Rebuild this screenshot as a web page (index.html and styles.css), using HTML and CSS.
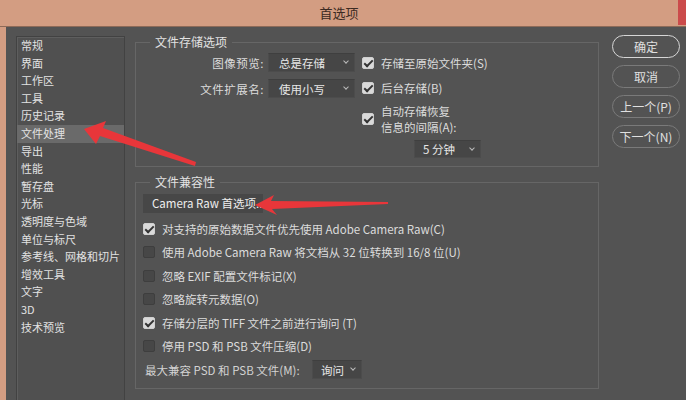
FILE: index.html
```html
<!DOCTYPE html>
<html lang="zh-CN">
  <head>
    <meta charset="UTF-8" />
    <meta name="viewport" content="width=device-width, initial-scale=1.0" />
    <title>首选项</title>
    <link rel="stylesheet" href="styles.css">
  </head>
  <body>
    <div class="window">
      <div class="titlebar">
        <span class="title">首选项</span>
        <span class="close"></span>
      </div>

      <div class="body">
        <!-- Список разделов -->
        <ul class="sidebar">
          <li>常规</li>
          <li>界面</li>
          <li>工作区</li>
          <li>工具</li>
          <li>历史记录</li>
          <li class="active">文件处理</li>
          <li>导出</li>
          <li>性能</li>
          <li>暂存盘</li>
          <li>光标</li>
          <li>透明度与色域</li>
          <li>单位与标尺</li>
          <li>参考线、网格和切片</li>
          <li>增效工具</li>
          <li>文字</li>
          <li>3D</li>
          <li>技术预览</li>
        </ul>

        <div class="main">
          <fieldset class="group group-save">
            <legend>文件存储选项</legend>
            <div class="save-grid">
              <div class="save-left">
                <div class="field">
                  <span class="field-label">图像预览:</span>
                  <div class="select select-wide">总是存储<span class="chev"></span></div>
                </div>
                <div class="field">
                  <span class="field-label">文件扩展名:</span>
                  <div class="select select-wide">使用小写<span class="chev"></span></div>
                </div>
              </div>
              <div class="save-right">
                <div class="check on"><span class="box"></span><span>存储至原始文件夹(S)</span></div>
                <div class="check on"><span class="box"></span><span>后台存储(B)</span></div>
                <div class="check on tall"><span class="box"></span><span>自动存储恢复<br>信息的间隔(A):</span></div>
                <div class="select select-minutes">5 分钟<span class="chev"></span></div>
              </div>
            </div>
          </fieldset>

          <fieldset class="group group-compat">
            <legend>文件兼容性</legend>
            <div class="raw-btn">Camera Raw 首选项...</div>
            <div class="check row on"><span class="box"></span><span>对支持的原始数据文件优先使用 Adobe Camera Raw(C)</span></div>
            <div class="check row"><span class="box"></span><span>使用 Adobe Camera Raw 将文档从 32 位转换到 16/8 位(U)</span></div>
            <div class="check row"><span class="box"></span><span>忽略 EXIF 配置文件标记(X)</span></div>
            <div class="check row"><span class="box"></span><span>忽略旋转元数据(O)</span></div>
            <div class="check row on"><span class="box"></span><span>存储分层的 TIFF 文件之前进行询问 (T)</span></div>
            <div class="check row"><span class="box"></span><span>停用 PSD 和 PSB 文件压缩(D)</span></div>
            <div class="row compat-row">
              <span class="compat-label">最大兼容 PSD 和 PSB 文件(M):</span>
              <div class="select select-ask">询问<span class="chev"></span></div>
            </div>
          </fieldset>
        </div>

        <div class="buttons">
          <button class="btn btn-primary">确定</button>
          <button class="btn">取消</button>
          <button class="btn">上一个(P)</button>
          <button class="btn">下一个(N)</button>
        </div>
      </div>

      <!-- Красные стрелки поверх окна -->
      <svg class="arrows" width="686" height="400" viewBox="0 0 686 400">
        <polygon points="84,129 106,121 103,128 196,162 195,166 100,136 96,144" fill="#e8363a" />
        <polygon points="255,205 274,195 271,201 388,202 388,204 272,209 277,215" fill="#e8363a" />
      </svg>
    </div>
  </body>
</html>
```

FILE: styles.css
```css
* {
  box-sizing: border-box;
}

body {
  margin: 0;
  width: 686px;
  height: 400px;
  overflow: hidden;
  background-color: #535353;
  font-family: "Noto Sans CJK SC", "Noto Sans", sans-serif;
  font-size: 11.5px;
  color: #dcdcdc;
}

.window {
  position: relative;
  height: 400px;
}

.titlebar {
  display: flex;
  height: 27px;
  background-color: #d39d82;
  border-bottom: 1px solid #8d6a58;
}

.title {
  flex: 1;
  text-align: center;
  line-height: 26px;
  font-size: 13px;
  color: #3b2a22;
}

.close {
  width: 8px;
  height: 25px;
  background-color: #cb4b4b;
}

.body {
  display: flex;
  align-items: flex-start;
  height: 373px;
  padding: 7px 0 0 10px;
  border-left: 6px solid #d39d82;
}

/* Список разделов */
.sidebar {
  list-style: none;
  margin: 2px 10px 0 0;
  padding: 0;
  width: 109px;
  height: 380px;
  border: 1px solid #424242;
  box-shadow: inset 1px 1px 0 #5e5e5e;
  background-color: #505050;
  font-size: 11px;
}

.sidebar li {
  height: 17.6px;
  line-height: 17.6px;
  padding-left: 4px;
  white-space: nowrap;
  color: #e2e2e2;
}

.sidebar li.active {
  background-color: #6a6a6a;
}

.main {
  width: 464px;
}

.group {
  margin: 0;
  padding: 0;
  min-width: 0;
  border: 1px solid #666;
}

.group legend {
  margin-left: 14px;
  padding: 0 5px;
  height: 16px;
  line-height: 16px;
  color: #e2e2e2;
  font-size: 12px;
}

.group-save {
  padding: 3px 0 8px 0;
}

.save-grid {
  display: flex;
}

.save-left {
  display: flex;
  flex-direction: column;
  gap: 7px;
  width: 219px;
}

.field {
  display: flex;
  align-items: center;
}

.field-label {
  flex: 1;
  text-align: right;
  margin-right: 4px;
  letter-spacing: 0.5px;
}

.select {
  position: relative;
  height: 19px;
  line-height: 18px;
  padding-left: 8px;
  background-color: #464646;
  border: 1px solid #4c4c4c;
  border-top-color: #3f3f3f;
  color: #e6e6e6;
  white-space: nowrap;
}

.chev {
  position: absolute;
  right: 6px;
  top: 5px;
  width: 4px;
  height: 4px;
  border-right: 1px solid #bbb;
  border-bottom: 1px solid #bbb;
  transform: rotate(45deg);
}

.select-wide {
  width: 87px;
  padding-left: 10px;
}

.save-right {
  margin-left: 7px;
  display: flex;
  flex-direction: column;
}

.check {
  display: flex;
  align-items: center;
  gap: 7px;
  height: 19px;
  white-space: nowrap;
}

.save-right .check {
  margin-bottom: 6px;
}

.save-right .check.tall {
  height: 32px;
  line-height: 16.5px;
  margin-bottom: 5px;
}

.box {
  position: relative;
  flex: none;
  width: 12px;
  height: 12px;
  border-radius: 2px;
  background-color: #474747;
  border: 1px solid #3e3e3e;
}

.check.on .box {
  background-color: #dadada;
  border-color: #cfcfcf;
}

.check.on .box::after {
  content: "";
  position: absolute;
  left: 3px;
  top: 0px;
  width: 3px;
  height: 7px;
  border-right: 2px solid #333;
  border-bottom: 2px solid #333;
  transform: rotate(45deg);
}

.select-minutes {
  margin-left: 52px;
  width: 67px;
  height: 18px;
  line-height: 17px;
}

.group-compat {
  margin-top: 7px;
  padding: 4px 0 6px 7px;
}

.group-compat legend {
  margin-left: 7px;
}

.raw-btn {
  width: 120px;
  height: 19px;
  line-height: 19px;
  padding-left: 9px;
  background-color: #474747;
  color: #eee;
  white-space: nowrap;
  margin-bottom: 4px;
}

.row {
  height: 23.5px;
}

.compat-row {
  display: flex;
  align-items: center;
  padding-left: 2px;
  color: #d2d2d2;
}

.compat-label {
  width: 167px;
  white-space: nowrap;
}

.select-ask {
  width: 50px;
}

.buttons {
  display: flex;
  flex-direction: column;
  gap: 7px;
  margin: 1px 0 0 13px;
}

.btn {
  width: 68px;
  height: 23px;
  padding: 0;
  border-radius: 12px;
  border: 1px solid #7a7a7a;
  background-color: #535353;
  color: #e0e0e0;
  font-family: inherit;
  font-size: 12px;
}

.btn-primary {
  border: 1.5px solid #d6d6d6;
}

.arrows {
  position: absolute;
  left: 0;
  top: 0;
  pointer-events: none;
}
```
